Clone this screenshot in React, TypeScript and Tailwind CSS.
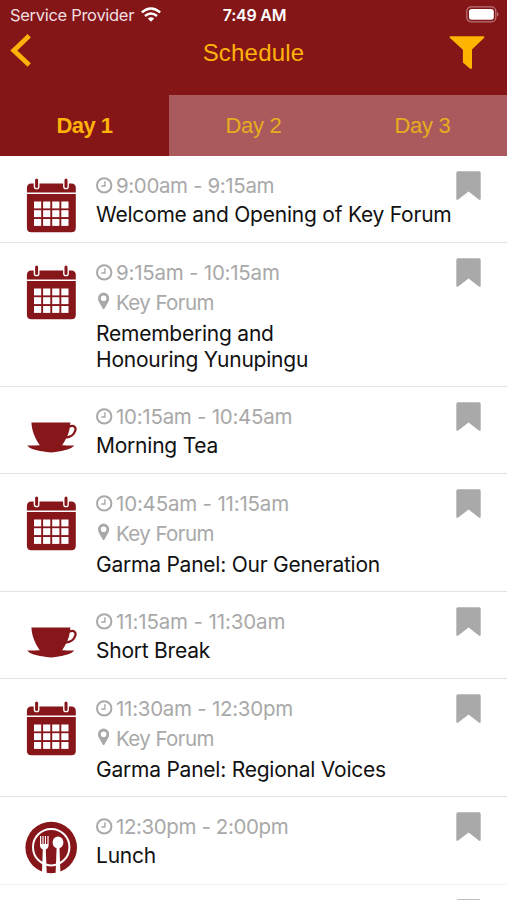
type IconName = 'calendar' | 'cup' | 'plate';

interface Session {
  time: string;
  title: string;
  location?: string;
  icon: IconName;
  height: string;
  tracking: string;
}

const sessions: Session[] = [
  { time: '9:00am - 9:15am', title: 'Welcome and Opening of Key Forum', icon: 'calendar', height: 'h-[87px]', tracking: 'tracking-[-0.38px]' },
  { time: '9:15am - 10:15am', title: 'Remembering and\nHonouring Yunupingu', location: 'Key Forum', icon: 'calendar', height: 'h-[144px]', tracking: 'tracking-[-0.23px]' },
  { time: '10:15am - 10:45am', title: 'Morning Tea', icon: 'cup', height: 'h-[87px]', tracking: 'tracking-[-0.27px]' },
  { time: '10:45am - 11:15am', title: 'Garma Panel: Our Generation', location: 'Key Forum', icon: 'calendar', height: 'h-[118px]', tracking: 'tracking-[-0.19px]' },
  { time: '11:15am - 11:30am', title: 'Short Break', icon: 'cup', height: 'h-[87px]', tracking: 'tracking-[-0.13px]' },
  { time: '11:30am - 12:30pm', title: 'Garma Panel: Regional Voices', location: 'Key Forum', icon: 'calendar', height: 'h-[118px]', tracking: 'tracking-[-0.27px]' },
  { time: '12:30pm - 2:00pm', title: 'Lunch', icon: 'plate', height: 'h-[88px]', tracking: 'tracking-[-0.4px]' },
];

const days = ['Day 1', 'Day 2', 'Day 3'];

function CalendarIcon() {
  const cols = [9, 18.1, 27.2, 36.3];
  const rows = [24.5, 33.2, 42];
  return (
    <svg width="52" height="58" viewBox="0 0 52 58">
      <path d="M1.9 15.4V10.9Q1.9 6.4 6.4 6.4H46.3Q50.8 6.4 50.8 10.9V15.4Z" fill="#86161a" />
      <path d="M1.9 17H50.8V50.8Q50.8 55.3 46.3 55.3H6.4Q1.9 55.3 1.9 50.8Z" fill="#86161a" />
      {[11.6, 41].map((x) => (
        <g key={x} strokeLinecap="round">
          <path d={`M${x} 4V9.4`} stroke="#fff" strokeWidth="5.8" />
          <path d={`M${x} 3V9.4`} stroke="#86161a" strokeWidth="3" />
        </g>
      ))}
      {rows.map((y) => cols.map((x) => <rect key={`${x}-${y}`} x={x} y={y} width="7.2" height="6.9" fill="#fff" />))}
    </svg>
  );
}

function CupIcon() {
  return (
    <svg width="52" height="58" viewBox="0 0 52 58">
      <path d="M6.4 14.4H45.4L44.8 19.5C43.6 27 40.5 32 37 37.5V40H15V37.5C10.4 30.9 7 23.8 6.4 14.4Z" fill="#86161a" />
      <path d="M44 18.8C49 16.3 51.3 19.4 50.3 22.5C49.1 26.7 45 29.2 40.4 29.5" fill="none" stroke="#86161a" strokeWidth="2.3" />
      <path d="M2.2 37.4C7 38 10 37.2 16 37.2H36C42 37.2 44 38 49.3 37.4C46 41.4 39 42 35 43.3Q26 45.6 17 43.3C12 42 5.2 41.4 2.2 37.4Z" fill="#86161a" />
    </svg>
  );
}

function PlateIcon() {
  return (
    <svg width="52" height="58" viewBox="0 0 52 58">
      <circle cx="26.2" cy="29.5" r="25.8" fill="#86161a" />
      <circle cx="26.2" cy="29.2" r="18.2" fill="none" stroke="#fff" strokeWidth="2" />
      <path d="M15 18V27Q15 30.4 17.8 31.4L16.8 58H21.8L20.8 31.4Q23.6 30.4 23.6 27V18H22.4V26H21V18H19.9V26H18.6V18H17.4V26H16.2V18Z" fill="#fff" />
      <ellipse cx="33" cy="24.4" rx="5.4" ry="6" fill="#fff" />
      <path d="M31.7 28H34.4L35.6 58H30.5Z" fill="#fff" />
    </svg>
  );
}

function SessionIcon({ name }: { name: IconName }) {
  if (name === 'cup') return <CupIcon />;
  if (name === 'plate') return <PlateIcon />;
  return <CalendarIcon />;
}

function ClockIcon() {
  return (
    <svg width="17" height="17" viewBox="0 0 17 17" fill="none" stroke="#a9a9a9" className="-mt-[2px]">
      <circle cx="8.2" cy="8.4" r="7.2" strokeWidth="2" />
      <path d="M8.9 4.3V9H5.3" strokeWidth="1.4" />
    </svg>
  );
}

function PinIcon() {
  return (
    <svg width="17" height="18" viewBox="0 0 17 18" className="-mt-[5px]">
      <path
        fillRule="evenodd"
        fill="#a9a9a9"
        d="M7.6.6A5.6 5.6 0 0 0 2 6.2C2 8 2.6 9 3.3 10.4L6.7 16.5Q7.6 17.8 8.5 16.5L11.9 10.4C12.6 9 13.2 8 13.2 6.2A5.6 5.6 0 0 0 7.6.6ZM7.6 3.4A2.8 2.8 0 1 1 7.6 9A2.8 2.8 0 1 1 7.6 3.4Z"
      />
    </svg>
  );
}

function BookmarkIcon() {
  return (
    <svg width="25" height="30" viewBox="0 0 25 30" className="shrink-0">
      <path d="M2 .3H23Q24.7.3 24.7 2V27.5Q24.7 29.8 22.8 28.5L12.6 20.5L2.2 28.5Q.3 29.8.3 27.5V2Q.3.3 2 .3Z" fill="#a9a9a9" />
    </svg>
  );
}

function StatusBar() {
  return (
    <div className="grid h-[30px] grid-cols-3 items-center pl-[10px] pr-[8px] text-white">
      <div className="flex items-center gap-[7px]">
        <span className="whitespace-nowrap text-[16.5px] leading-5 tracking-[-0.3px] text-[#f1dfe0]">Service Provider</span>
        <svg width="20" height="15" viewBox="0 0 20 15" fill="none" stroke="#fff" className="-mt-px shrink-0">
          <path d="M.8 5.4Q10-2.4 19.2 5.4" strokeWidth="2.5" />
          <path d="M4 9Q10 3.9 16 9" strokeWidth="2.4" />
          <path d="M6.8 11.6Q10 8.8 13.2 11.6L10 14.7Z" fill="#fff" stroke="none" />
        </svg>
      </div>
      <span className="whitespace-nowrap text-center text-[16px] font-semibold leading-5 tracking-[-0.25px]">7:49 AM</span>
      <svg width="33" height="17" viewBox="0 0 33 17" className="-mt-[2px] justify-self-end">
        <rect x=".8" y=".8" width="29" height="15" rx="4.3" fill="none" stroke="#b97577" strokeWidth="1.2" />
        <rect x="3" y="3" width="24.8" height="10.7" rx="2.6" fill="#fff" />
        <path d="M31 5.8Q33.8 8.3 31 10.8Z" fill="#b97577" />
      </svg>
    </div>
  );
}

function Header() {
  return (
    <header className="bg-[#841618]">
      <StatusBar />
      <div className="grid h-[65px] grid-cols-3 items-start pt-[4px]">
        <svg width="36" height="34" viewBox="0 0 36 34" className="ml-[10px]">
          <path d="M19.2 1.8L3.8 16.4L19.2 31" fill="none" stroke="#ffb30a" strokeWidth="4.8" />
        </svg>
        <h1 className="pt-[4px] text-center font-['Liberation_Sans',sans-serif] text-[24px] leading-[30px] tracking-[0.2px] text-[#ffb30a]">Schedule</h1>
        <svg width="36" height="34" viewBox="0 0 36 34" className="mr-[22px] mt-[1px] justify-self-end">
          <path d="M1.5 1.3H34.5Q36 1.3 35 3L23 14.4V32.5Q23 34.8 20.8 33.5L13.9 27.5V14.8L1 3Q.2 1.3 1.5 1.3Z" fill="#ffb400" />
        </svg>
      </div>
      <nav className="grid h-[61px] grid-cols-3 font-['Liberation_Sans',sans-serif] text-[22px]">
        {days.map((day, i) => (
          <button key={day} className={i === 0 ? 'font-bold tracking-[-0.5px] text-[#ffb30a]' : 'bg-[#aa5a5d] tracking-[-0.3px] text-[#e6ad1d]'}>
            {day}
          </button>
        ))}
      </nav>
    </header>
  );
}

function SessionRow({ session }: { session: Session }) {
  return (
    <li className={`${session.height} flex items-start border-b border-[#e2e2e2] pl-[25px] pr-[26px] last:border-[#f0f0f0]`}>
      <div className="w-[71px] shrink-0 pt-[21px]">
        <SessionIcon name={session.icon} />
      </div>
      <div className="min-w-0 flex-1 whitespace-nowrap pt-[15px]">
        <div className="flex h-[30px] items-center gap-[3px] text-[20.5px] text-[#a9a9a9]">
          <ClockIcon />
          <span className={session.tracking}>{session.time}</span>
        </div>
        {session.location && (
          <div className="mb-[2px] flex h-[30px] items-center gap-[3px] text-[20.5px] tracking-[-0.6px] text-[#a9a9a9]">
            <PinIcon />
            <span>{session.location}</span>
          </div>
        )}
        <h2 className="whitespace-pre pt-px text-[21px] leading-[26px] tracking-[-0.23px] text-[#111]">{session.title}</h2>
      </div>
      <div className="pt-[15px]">
        <BookmarkIcon />
      </div>
    </li>
  );
}

export default function App() {
  return (
    <div className="flex h-[900px] w-[507px] flex-col overflow-hidden bg-white font-[Inter,sans-serif]">
      <Header />
      <ul>
        {sessions.map((session) => (
          <SessionRow key={session.time} session={session} />
        ))}
      </ul>
      <div className="flex justify-end pr-[26px] pt-[14px]">
        <BookmarkIcon />
      </div>
    </div>
  );
}
